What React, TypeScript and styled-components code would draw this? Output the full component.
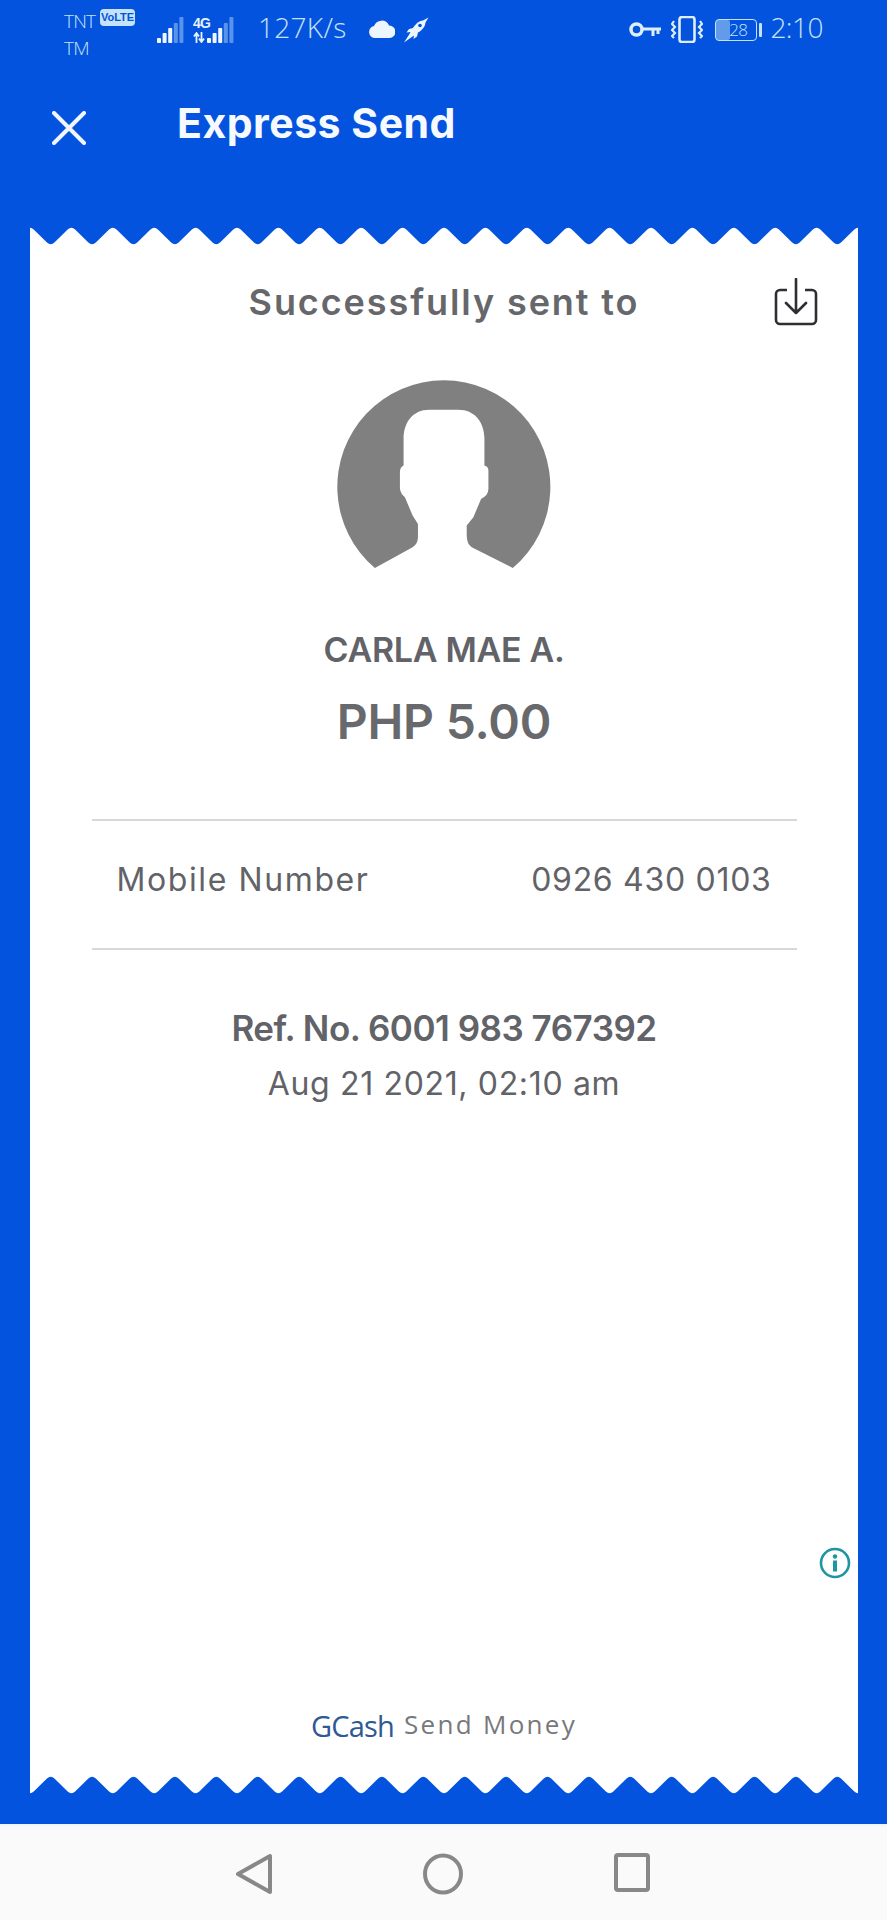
import React from 'react';
import styled, { createGlobalStyle } from 'styled-components';

const BLUE = '#0353de';
const STATUS = '#c4e3f8';
const GREY = '#626368';

const GlobalStyle = createGlobalStyle`
  html, body { margin: 0; padding: 0; background: ${BLUE}; }
  * { box-sizing: border-box; }
`;

const Page = styled.div`
  width: 887px;
  height: 1920px;
  display: flex;
  flex-direction: column;
  background: ${BLUE};
  font-family: Inter, "Liberation Sans", sans-serif;
  overflow: hidden;
`;

const StatusBar = styled.div`
  height: 58px;
  padding: 8px 64px 0;
  display: flex;
  align-items: flex-start;
  color: ${STATUS};
  font-family: "Open Sans", sans-serif;
  font-weight: 300;
`;

const Carrier = styled.div`
  width: 93px;
  display: grid;
  grid-template-columns: 36px auto;
  font-size: 19px;
  line-height: 27px;
  letter-spacing: -0.8px;
`;

const VolteBadge = styled.span`
  width: 35px;
  height: 17px;
  margin-top: 1px;
  border-radius: 4px;
  background: ${STATUS};
  color: ${BLUE};
  font: 700 11px/17px "Liberation Sans", sans-serif;
  letter-spacing: 0;
  text-align: center;
`;

const SignalGroup = styled.div`
  display: flex;
  margin: 9px 0 0;
  gap: 9px;
`;

const NetworkSignal = styled.div`
  position: relative;
  display: flex;
  width: 41px;
  justify-content: flex-end;
`;

const NetworkLabel = styled.span`
  position: absolute;
  left: 0;
  top: -1px;
  font: 700 14px/14px "Liberation Sans", sans-serif;
  color: #e3f2fc;
  letter-spacing: -0.9px;
`;

const NetworkArrows = styled.svg`
  position: absolute;
  left: 0;
  top: 15px;
  display: block;
`;

const Speed = styled.span`
  margin: 0 0 0 24px;
  font-size: 28px;
  line-height: 38px;
  letter-spacing: 0.3px;
`;

const Spacer = styled.div`
  flex: 1;
`;

const StatusIcon = styled.svg<{ $gap?: number; $top?: number }>`
  display: block;
  flex: none;
  margin-left: ${(p) => p.$gap ?? 0}px;
  margin-top: ${(p) => p.$top ?? 0}px;
`;

const BatteryBody = styled.div`
  position: relative;
  width: 42px;
  height: 22px;
  margin: 11px 0 0 12px;
  border: 1.5px solid ${STATUS};
  border-radius: 4px;
  font-size: 17px;
  line-height: 19px;
  letter-spacing: -0.5px;
  text-align: center;
  padding-left: 4px;
`;

const BatteryLevel = styled.i`
  position: absolute;
  left: 0;
  top: 0;
  bottom: 0;
  border-radius: 2px;
  background: rgba(196, 227, 248, 0.5);
`;

const BatteryNub = styled.div`
  width: 3px;
  height: 14px;
  margin: 15px 8px 0 2px;
  border-radius: 1px;
  background: ${STATUS};
`;

const Clock = styled.span`
  font-size: 28px;
  line-height: 38px;
  letter-spacing: -0.5px;
`;

const Header = styled.header`
  height: 168px;
  padding: 38px 0 0 52px;
  display: flex;
  align-items: flex-start;
  color: #f6faff;
`;

const CloseIcon = styled.svg`
  display: block;
  margin-top: 15px;
`;

const Title = styled.h1`
  margin: 0 0 0 91px;
  font-size: 41px;
  line-height: 54px;
  font-weight: 700;
  letter-spacing: 0.5px;
`;

const Receipt = styled.main`
  position: relative;
  flex: 1;
  margin: 0 29px 0 30px;
  display: flex;
  flex-direction: column;
`;

const Edge = styled.svg`
  display: block;
  flex: none;
`;

const ReceiptBody = styled.div`
  flex: 1;
  background: #fff;
  display: flex;
  flex-direction: column;
  align-items: center;
  margin: -1px 0;
  color: ${GREY};
`;

const SentRow = styled.div`
  align-self: stretch;
  margin-top: 33px;
  padding: 0 40px;
  display: grid;
  grid-template-columns: 1fr auto 1fr;
  align-items: center;
`;

const SentHeading = styled.h2`
  grid-column: 2;
  margin: 0;
  font-size: 36px;
  line-height: 46px;
  font-weight: 600;
  letter-spacing: 1.9px;
  color: #66676b;
`;

const SaveIcon = styled.svg`
  grid-column: 3;
  justify-self: end;
  display: block;
`;

const Avatar = styled.svg`
  display: block;
  margin-top: 54px;
`;

const Name = styled.div`
  margin-top: 60px;
  font-size: 34px;
  line-height: 44px;
  font-weight: 600;
  letter-spacing: -0.3px;
`;

const Amount = styled.div`
  margin-top: 20px;
  font-size: 48px;
  line-height: 60px;
  font-weight: 600;
  letter-spacing: -0.2px;
  color: #68696d;
`;

const DetailRow = styled.div`
  width: 705px;
  height: 131px;
  margin-top: 67px;
  padding: 0 25px 10px;
  display: flex;
  justify-content: space-between;
  align-items: center;
  border-top: 2px solid #d8d8d8;
  border-bottom: 2px solid #d8d8d8;
  font-size: 32px;
  letter-spacing: 0.7px;
`;

const DetailLabel = styled.span`
  letter-spacing: 1.6px;
`;

const RefNumber = styled.div`
  margin-top: 56px;
  font-size: 35px;
  line-height: 44px;
  font-weight: 600;
  letter-spacing: -0.5px;
`;

const DateLine = styled.div`
  margin-top: 12px;
  font-size: 32px;
  line-height: 44px;
  letter-spacing: 0.65px;
`;

const Brand = styled.div`
  margin-top: auto;
  margin-bottom: 32px;
  display: flex;
  align-items: flex-start;
  gap: 10px;
  font-family: "Open Sans", sans-serif;
`;

const BrandName = styled.span`
  margin-top: 2px;
  font-size: 29px;
  line-height: 36px;
  font-weight: 400;
  color: #2d5a94;
  letter-spacing: -0.8px;
`;

const BrandLabel = styled.span`
  font-size: 26px;
  line-height: 36px;
  color: #77787c;
  letter-spacing: 2.3px;
`;

const InfoIcon = styled.svg`
  position: absolute;
  right: 7px;
  top: 1321px;
  display: block;
`;

const Gutter = styled.div`
  height: 29px;
  flex: none;
`;

const NavBar = styled.nav`
  height: 96px;
  flex: none;
  background: #fafafa;
  border-top: 2px solid #eef6fa;
  display: flex;
  justify-content: center;
  align-items: flex-start;
  padding: 27px 2px 0 0;
  gap: 151px;
`;

const WIDTH = 828;
const TOOTH = WIDTH / 20;

// zigzag of the torn receipt paper with softened tips, white side faces the body
const tornPath = (flip: boolean) => {
  const fy = (y: number) => (flip ? 20 - y : y);
  const ease = 0.18;
  const dx = (TOOTH / 2) * ease;
  const dy = 20 * ease;
  let d = `M${-TOOTH} ${fy(20)}L${-TOOTH} ${fy(dy)}`;
  for (let i = -1; i <= 21; i++) {
    const peak = i * TOOTH;
    const notch = peak + TOOTH / 2;
    d += `L${peak - dx} ${fy(dy)}Q${peak} ${fy(0)} ${peak + dx} ${fy(dy)}`;
    d += `L${notch - dx} ${fy(20 - dy)}Q${notch} ${fy(20)} ${notch + dx} ${fy(20 - dy)}`;
  }
  return `${d}L${WIDTH + 2 * TOOTH} ${fy(20)}Z`;
};

const TornEdge = ({ bottom }: { bottom?: boolean }) => (
  <Edge width={WIDTH} height={20} viewBox={`0 0 ${WIDTH} 20`}>
    <path d={tornPath(!!bottom)} fill="#fff" />
  </Edge>
);

const Bars = ({ lit }: { lit: number }) => (
  <svg width="27" height="26" viewBox="0 0 27 26" style={{ display: 'block' }}>
    {[5, 10, 15, 20, 26].map((h, i) => (
      <rect
        key={h}
        x={i * 5.6}
        y={26 - h}
        width="4"
        height={h}
        rx="0.8"
        fill={i < lit ? '#eef7fd' : 'rgba(196,227,248,0.45)'}
      />
    ))}
  </svg>
);

const App: React.FC = () => {
  return (
    <Page>
      <GlobalStyle />
      <StatusBar>
        <Carrier>
          <span>TNT</span>
          <VolteBadge>VoLTE</VolteBadge>
          <span>TM</span>
        </Carrier>
        <SignalGroup>
          <Bars lit={3} />
          <NetworkSignal>
            <NetworkLabel>4G</NetworkLabel>
            <NetworkArrows width="12" height="11" viewBox="0 0 12 11">
              <path d="M3.500 11V2M1 4.500 3.500 1 6 4.500M8.500 0v9M6 6.500 8.500 10 11 6.500" fill="none" stroke="#e3f2fc" strokeWidth="1.800" />
            </NetworkArrows>
            <Bars lit={3} />
          </NetworkSignal>
        </SignalGroup>
        <Speed>127K/s</Speed>
        <StatusIcon $gap={22} $top={12} width="26" height="18" viewBox="0 0 26 18">
          <path
            d="M6 18a6 6 0 0 1-1-11.900A8 8 0 0 1 20 5.600 6.200 6.200 0 0 1 20.500 18z"
            fill="#edf6fd"
          />
        </StatusIcon>
        <StatusIcon $gap={8} $top={9} width="26" height="26" viewBox="0 0 26 26">
          <path
            d="M25.500 .5 20 3.500C16 3.800 12.500 7 10 11L6 12 3.500 15.500 7.500 15 6.500 17 1 25.500 9.500 19.500 11 18.500 10.500 22 14 19.500 15 15.500C19 13.500 22.200 9.500 22.500 5.500z"
            fill="#edf6fd"
          />
          <circle cx="17" cy="8.500" r="1.800" fill={BLUE} />
        </StatusIcon>
        <Spacer />
        <StatusIcon $top={14} width="32" height="16" viewBox="0 0 32 16">
          <circle cx="7.500" cy="7.500" r="5.500" fill="none" stroke="#dceffb" strokeWidth="3.500" />
          <path d="M13 7h19M24 7v7M29 7v5" fill="none" stroke="#dceffb" strokeWidth="3" />
        </StatusIcon>
        <StatusIcon $gap={10} $top={8} width="32" height="27" viewBox="0 0 32 27">
          <rect x="8.500" y="1" width="15" height="25" rx="2.500" fill="none" stroke="#dceffb" strokeWidth="2.600" />
          <path
            d="M3 5 1 8l3 3-3 3 3 3-3 3 2 2M29 5l2 3-3 3 3 3-3 3 3 3-2 2"
            fill="none"
            stroke="#dceffb"
            strokeWidth="2.200"
          />
        </StatusIcon>
        <BatteryBody>
          <BatteryLevel style={{ width: `${28 * 0.42 + 2}px` }} />
          28
        </BatteryBody>
        <BatteryNub />
        <Clock>2:10</Clock>
      </StatusBar>

      <Header>
        <CloseIcon width="34" height="34" viewBox="0 0 34 34">
          <path d="M2 2 32 32M32 2 2 32" stroke="#f2f7ff" strokeWidth="4" strokeLinecap="round" />
        </CloseIcon>
        <Title>Express Send</Title>
      </Header>

      <Receipt>
        <TornEdge />
        <ReceiptBody>
          <SentRow>
            <SentHeading>Successfully sent to</SentHeading>
            <SaveIcon width="44" height="48" viewBox="0 0 44 48" fill="none" stroke="#2d2f33" strokeWidth="2.600">
              <path d="M13 12H6a4 4 0 0 0-4 4v26a4 4 0 0 0 4 4h32a4 4 0 0 0 4-4V16a4 4 0 0 0-4-4h-7" />
              <path d="M22 1v34M12 25l10 10 10-10" strokeLinecap="round" strokeLinejoin="round" />
            </SaveIcon>
          </SentRow>
          <Avatar width="214" height="188" viewBox="13 -5 640 563">
            <path
              d="M126 558A319 319 0 1 1 539 558L416 496Q401 486 401 461V431L421 406 444 351Q466 341 466 321V266Q466 254 454 251V170C454 125 428 84 375 84H290C237 84 212 125 212 170V251Q201 256 201 271V321Q204 338 216 346L239 401 255 426V466Q255 486 239 496Z"
              fill="#808080"
            />
          </Avatar>
          <Name>CARLA MAE A.</Name>
          <Amount>PHP 5.00</Amount>
          <DetailRow>
            <DetailLabel>Mobile Number</DetailLabel>
            <span>0926 430 0103</span>
          </DetailRow>
          <RefNumber>Ref. No. 6001 983 767392</RefNumber>
          <DateLine>Aug 21 2021, 02:10 am</DateLine>
          <Brand>
            <BrandName>GCash</BrandName>
            <BrandLabel>Send Money</BrandLabel>
          </Brand>
        </ReceiptBody>
        <TornEdge bottom />
        <InfoIcon width="32" height="32" viewBox="0 0 32 32">
          <circle cx="16" cy="16" r="14" fill="#fff" stroke="#1e95a3" strokeWidth="2.600" />
          <circle cx="16" cy="9.500" r="2.200" fill="#1e95a3" />
          <rect x="14" y="13.500" width="4" height="11" fill="#1e95a3" />
        </InfoIcon>
      </Receipt>
      <Gutter />

      <NavBar>
        <svg width="36" height="42" viewBox="0 0 36 42" fill="none" stroke="#888" strokeWidth="4" strokeLinejoin="round">
          <path d="M34 3V39L2 21Z" />
        </svg>
        <svg width="40" height="42" viewBox="0 0 40 42" fill="none" stroke="#888" strokeWidth="4">
          <ellipse cx="20" cy="21" rx="18" ry="18.500" />
        </svg>
        <svg width="36" height="40" viewBox="0 0 36 40" fill="none" stroke="#888" strokeWidth="4" strokeLinejoin="round">
          <rect x="2" y="2" width="32" height="35" rx="2" />
        </svg>
      </NavBar>
    </Page>
  );
};

export default App;
